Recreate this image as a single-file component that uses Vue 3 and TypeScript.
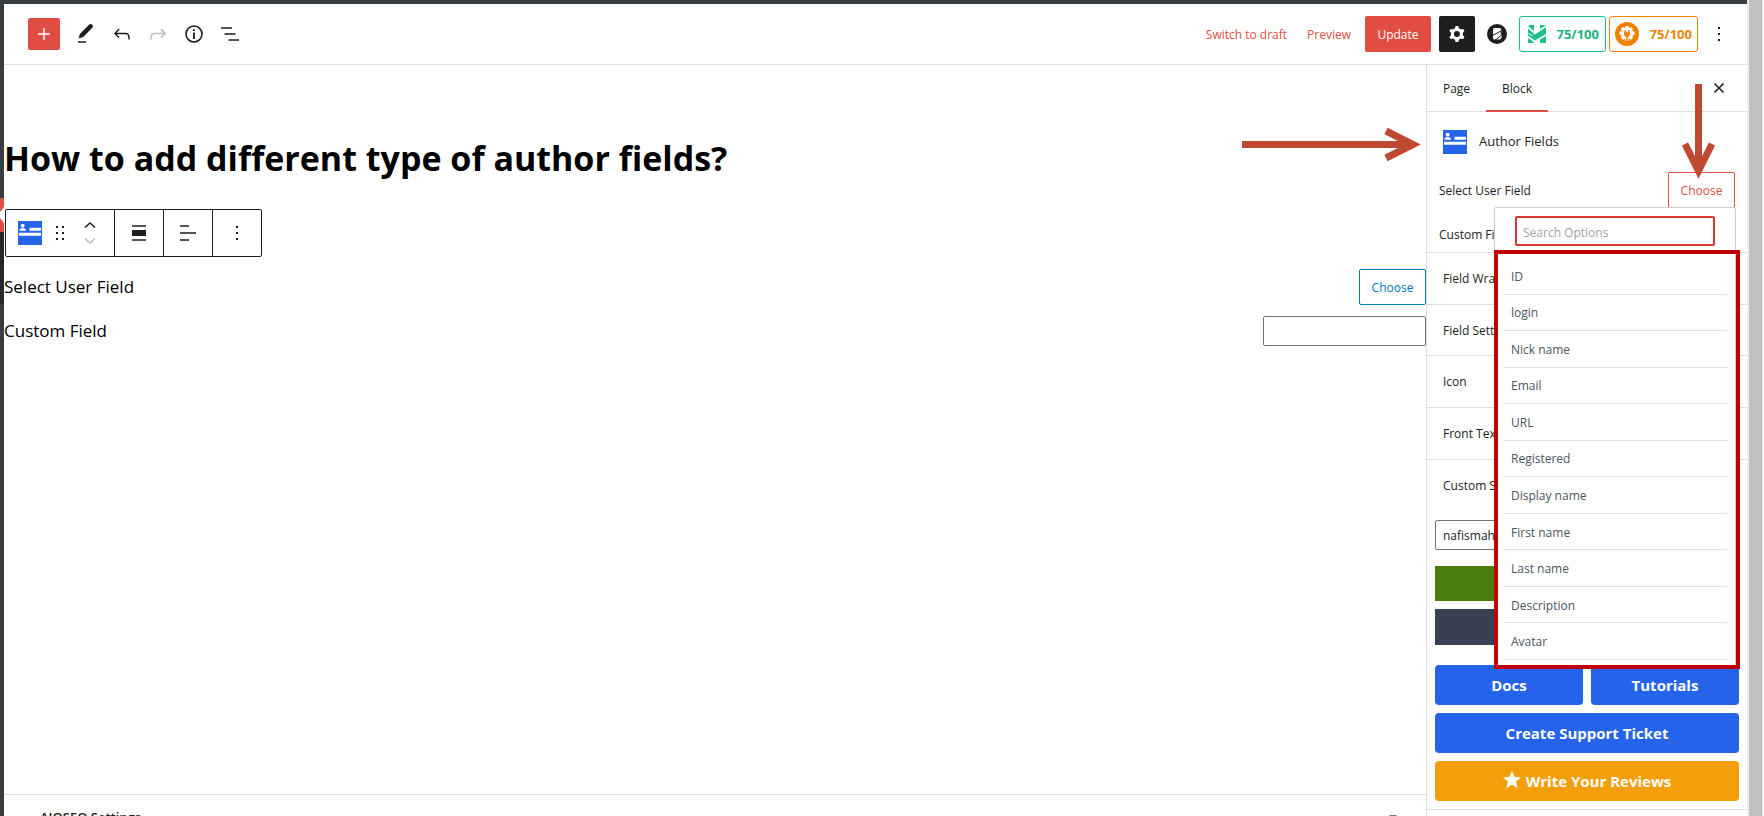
<script setup lang="ts">
import { ref } from 'vue'

const tab = ref<'page' | 'block'>('block')
const search = ref('')
const customField = ref('')
const query = ref('nafismahmud')
const panels = ['Field Wrapper', 'Field Settings', 'Icon', 'Front Text']
const options = ['ID', 'login', 'Nick name', 'Email', 'URL', 'Registered', 'Display name', 'First name', 'Last name', 'Description', 'Avatar']
</script>

<template>
  <div class="page">
    <div class="admin-strip">
      <div class="strip-active"></div>
      <div class="strip-sub"></div>
    </div>
    <div class="editor">
      <header class="topbar">
        <div class="tools">
          <button class="add" aria-label="Add block">
            <svg width="24" height="24" viewBox="0 0 24 24"><path d="M12 6v12M6 12h12" stroke="#fff" stroke-width="1.5" /></svg>
          </button>
          <button class="tool" aria-label="Tools">
            <svg width="24" height="24" viewBox="0 0 24 24"><path d="M4.6 16.2 5.9 12 15.2 2.6c.9-.9 2.200-.6 3 .2.9.9 1 2 .1 2.900L9 15.200 4.600 16.200Z" fill="#1e1e1e" /><path d="M4 20h8" stroke="#1e1e1e" stroke-width="1.5" /></svg>
          </button>
          <button class="tool" aria-label="Undo">
            <svg width="24" height="24" viewBox="0 0 24 24"><path d="M18.300 11.700c-.6-.6-1.400-.9-2.300-.9H6.700l2.900-3.300-1.100-1-4.500 5L8.500 16l1-1-2.700-2.700H16c.5 0 .9.2 1.300.5 1 1 1 3.400 1 4.500v.3h1.500v-.2c0-1.500 0-4.300-1.500-5.700z" fill="#1e1e1e" /></svg>
          </button>
          <button class="tool" aria-label="Redo" disabled>
            <svg width="24" height="24" viewBox="0 0 24 24"><path d="M15.600 6.500l-1.100 1 2.900 3.300H8c-.9 0-1.700.3-2.300.9-1.400 1.500-1.400 4.200-1.400 5.600v.2h1.500v-.3c0-1.100 0-3.500 1-4.500.3-.3.7-.5 1.300-.5h9.200L14.500 15l1.100 1.100 4.600-4.600-4.600-5z" fill="#bcbcbc" /></svg>
          </button>
          <button class="tool" aria-label="Details">
            <svg width="24" height="24" viewBox="0 0 24 24"><circle cx="12" cy="12" r="8" fill="none" stroke="#1e1e1e" stroke-width="1.6" /><path d="M11.100 10.600h1.800V17h-1.800zM11.100 7.200h1.800v1.700h-1.800z" fill="#1e1e1e" /></svg>
          </button>
          <button class="tool" aria-label="List view">
            <svg width="24" height="24" viewBox="0 0 24 24"><path d="M3 6h11M6.500 12h11M10.500 18h10.500" stroke="#1e1e1e" stroke-width="1.500" /></svg>
          </button>
        </div>
        <div class="actions">
          <button class="text-btn draft">Switch to draft</button>
          <button class="text-btn preview">Preview</button>
          <button class="update">Update</button>
          <button class="gear" aria-label="Settings">
            <svg width="24" height="24" viewBox="0 0 24 24"><path d="M10.289 4.836A1 1 0 0 1 11.275 4h1.306a1 1 0 0 1 .987.836l.244 1.466c.788.260 1.503.679 2.108 1.218l1.393-.522a1 1 0 0 1 1.216.437l.653 1.130a1 1 0 0 1-.230 1.273l-1.148.944a6.025 6.025 0 0 1 0 2.435l1.149.946a1 1 0 0 1 .230 1.272l-.653 1.130a1 1 0 0 1-1.216.437l-1.394-.522c-.605.540-1.320.958-2.108 1.218l-.244 1.466a1 1 0 0 1-.987.836h-1.306a1 1 0 0 1-.986-.836l-.244-1.466a5.995 5.995 0 0 1-2.108-1.218l-1.394.522a1 1 0 0 1-1.217-.436l-.653-1.131a1 1 0 0 1 .230-1.272l1.149-.946a6.026 6.026 0 0 1 0-2.435l-1.148-.944a1 1 0 0 1-.230-1.272l.653-1.131a1 1 0 0 1 1.217-.437l1.393.522a5.994 5.994 0 0 1 2.108-1.218l.244-1.466zM14.929 12a3 3 0 1 1-6 0 3 3 0 0 1 6 0z" fill="#fff" fill-rule="evenodd" /></svg>
          </button>
          <button class="brand" aria-label="Blocks">
            <svg width="20" height="20" viewBox="0 0 20 20"><circle cx="10" cy="10" r="10" fill="#1e1e1e" /><path d="M7.500 4h4.900c2.300 0 2.900 3.600.9 5.200 2.300 1.400 2 6.400-1.600 6.400H7.500c-.9 0-1.500-.6-1.500-1.500V5.500C6 4.600 6.600 4 7.500 4Z" fill="#fff" /><path d="M5 11.800 15 6.400M8 16.400 15.500 10.400" stroke="#1e1e1e" stroke-width="1" /></svg>
          </button>
          <button class="score green">
            <svg width="18" height="18" viewBox="0 0 18 18"><path d="M1 0h5v6L.5 1.500zM12 0h6L12 4zM0 3.500 7 9.500 18 2v7L7 15.500 0 11zM0 13l5.500 3.500V18H0zM12 14.500 18 11v7h-6z" fill="#1ec08a" /><path d="M0 8.500 5 11" stroke="#fff" stroke-width=".8" /></svg>
            <span>75/100</span>
          </button>
          <button class="score orange">
            <svg width="24" height="24" viewBox="0 0 24 24"><circle cx="12" cy="12" r="12" fill="#f18200" /><path d="M10.500 4h3l.5 2 2-1 2 2-1 2 2.500.7v3l-2.300.8 1 2-2.200 2.200-2-1-.5 2.300h-3l-.7-2.300-2 1-2-2.200 1-2-2.300-.8v-3L6.800 9l-1-2 2.200-2 2 1z" fill="#fff" /><path d="M10.200 8v3M13.800 8v3" stroke="#f18200" stroke-width="1.400" /><path d="M9 10.300h6v1.700c0 1.600-.8 2.600-2.200 3v4.500h-1.600V15C9.800 14.600 9 13.600 9 12z" fill="#f18200" /></svg>
            <span>75/100</span>
          </button>
          <button class="more" aria-label="Options">
            <svg width="24" height="24" viewBox="0 0 24 24"><path d="M11 5h2v2h-2zM11 11h2v2h-2zM11 17h2v2h-2z" fill="#1e1e1e" /></svg>
          </button>
        </div>
      </header>

      <div class="body">
        <main class="main">
          <div class="canvas">
            <h1>How to add different type of author fields?</h1>
            <div class="block-toolbar">
              <div class="group first">
                <button class="plain" aria-label="Author Fields">
                  <svg width="24" height="24" viewBox="0 0 24 24"><path d="M0 0h24v24H0z" fill="#2563eb" /><circle cx="4.700" cy="4.700" r="1.900" fill="#fff" /><path d="M1.500 9.700V8.500Q2 7 4.700 7T8 8.500v1.200zM11.500 6.700H23v3H11.500zM1 11.800h22v3H1z" fill="#fff" /></svg>
                </button>
                <button class="plain" aria-label="Drag">
                  <svg width="10" height="16" viewBox="0 0 10 16"><path d="M1 1h2v2H1zM7 1h2v2H7zM1 7h2v2H1zM7 7h2v2H7zM1 13h2v2H1zM7 13h2v2H7z" fill="#1e1e1e" /></svg>
                </button>
                <button class="plain mover" aria-label="Move">
                  <svg width="12" height="24" viewBox="0 0 12 24"><path d="M1 6.500 6 2l5 4.500" fill="none" stroke="#1e1e1e" stroke-width="1.600" /><path d="m1 17.500 5 4.500 5-4.500" fill="none" stroke="#bcbcbc" stroke-width="1.600" /></svg>
                </button>
              </div>
              <div class="group">
                <button class="plain" aria-label="Align">
                  <svg width="24" height="24" viewBox="0 0 24 24"><path d="M5 5h14M5 19h14" stroke="#1e1e1e" stroke-width="1.500" /><path d="M5 9h14v6H5z" fill="#1e1e1e" /></svg>
                </button>
              </div>
              <div class="group">
                <button class="plain" aria-label="Text align">
                  <svg width="24" height="24" viewBox="0 0 24 24"><path d="M4 5h9M4 12h16M4 19h9" stroke="#1e1e1e" stroke-width="1.500" /></svg>
                </button>
              </div>
              <div class="group">
                <button class="plain" aria-label="More">
                  <svg width="24" height="24" viewBox="0 0 24 24"><path d="M11 5h2v2h-2zM11 11h2v2h-2zM11 17h2v2h-2z" fill="#1e1e1e" /></svg>
                </button>
              </div>
            </div>
            <div class="field-row">
              <span>Select User Field</span>
              <button class="choose blue">Choose</button>
            </div>
            <div class="field-row second">
              <label for="canvas-field">Custom Field</label>
              <input id="canvas-field" v-model="customField" class="box" type="text" />
            </div>
          </div>
          <section class="metabox">
            <h2>AIOSEO Settings</h2>
            <svg width="10" height="6" viewBox="0 0 10 6"><path d="M1 0h8L5 5z" fill="#787c82" /></svg>
          </section>
        </main>

        <aside class="sidebar">
          <nav class="tabs">
            <button :class="{ active: tab === 'page' }" @click="tab = 'page'">Page</button>
            <button :class="{ active: tab === 'block' }" @click="tab = 'block'">Block</button>
            <button class="close" aria-label="Close">
              <svg width="12" height="12" viewBox="0 0 12 12"><path d="m1.500 1.500 9 9M10.500 1.500l-9 9" stroke="#1e1e1e" stroke-width="1.600" /></svg>
            </button>
          </nav>
          <div class="card">
            <svg width="24" height="24" viewBox="0 0 24 24"><path d="M0 0h24v24H0z" fill="#2563eb" /><circle cx="4.700" cy="4.700" r="1.900" fill="#fff" /><path d="M1.500 9.700V8.500Q2 7 4.700 7T8 8.500v1.200zM11.500 6.700H23v3H11.500zM1 11.800h22v3H1z" fill="#fff" /></svg>
            <h2>Author Fields</h2>
          </div>
          <div class="select-row">
            <span>Select User Field</span>
            <button class="choose red">Choose</button>
            <div class="popover">
              <input v-model="search" class="search" type="text" placeholder="Search Options" aria-label="Search Options" />
              <div class="frame">
                <ul>
                  <li v-for="o in options" :key="o"><button>{{ o }}</button></li>
                </ul>
              </div>
            </div>
          </div>
          <div class="custom-row">Custom Field</div>
          <button v-for="p in panels" :key="p" class="panel">{{ p }}</button>
          <section class="source">
            <label for="source">Custom Source</label>
            <input id="source" v-model="query" class="box" type="text" />
            <button class="bar olive" aria-label="Apply"></button>
            <button class="bar slate" aria-label="Reset"></button>
          </section>
          <div class="links">
            <a href="#docs">Docs</a>
            <a href="#tutorials">Tutorials</a>
            <a href="#support" class="wide">Create Support Ticket</a>
            <a href="#reviews" class="wide amber">
              <svg width="18" height="20" viewBox="0 0 18 20"><path d="m9 0 2.600 5.800 6.400.6-4.800 4.200L14.600 17 9 13.700 3.400 17l1.400-6.400L0 6.400l6.400-.6z" fill="#fff" /></svg>
              <span>Write Your Reviews</span>
            </a>
          </div>
          <svg class="arrow across" width="180" height="36" viewBox="0 0 180 36"><path d="M0 17.500h168" stroke="#bf4a31" stroke-width="7" /><path d="M144 4 171 17.500 144 31" fill="none" stroke="#bf4a31" stroke-width="7" /></svg>
          <svg class="arrow down" width="36" height="96" viewBox="0 0 36 96"><path d="M17.500 0v84" stroke="#bf4a31" stroke-width="7" /><path d="M4 60 17.500 87 31 60" fill="none" stroke="#bf4a31" stroke-width="7" /></svg>
        </aside>
      </div>
    </div>
    <div class="scroll"><div class="thumb"></div></div>
  </div>
</template>

<style>
body {
  margin: 0;
  overflow: hidden;
}
</style>

<style scoped>
.page {
  display: flex;
  height: 100vh;
  overflow: hidden;
  background: #fff;
  color: #1e1e1e;
  font: 12px/20px "Open Sans", "Noto Sans", sans-serif;
}
.page * {
  box-sizing: border-box;
}
button,
input {
  margin: 0;
  padding: 0;
  border: 0;
  background: none;
  color: inherit;
  font: inherit;
}
svg {
  display: block;
  flex: none;
}
.admin-strip {
  width: 4px;
  flex: none;
  padding-top: 198px;
  background: #373c40;
}
.strip-active {
  height: 34px;
  background: #e14d43;
}
.strip-active::before {
  content: "";
  display: block;
  height: 34px;
  background: #fff;
  clip-path: polygon(100% 9px, 100% 25px, 0 20px, 0 14px);
}
.strip-sub {
  height: 72px;
  background: #23282a;
}
.editor {
  flex: 1;
  min-width: 0;
  display: flex;
  flex-direction: column;
  border-top: 4px solid #373c40;
}
.topbar {
  display: flex;
  flex: none;
  align-items: center;
  justify-content: space-between;
  height: 61px;
  padding: 0 10px 0 24px;
  border-bottom: 1px solid #ddd;
}
.tools,
.actions {
  display: flex;
  align-items: center;
}
.add {
  display: grid;
  place-items: center;
  width: 32px;
  height: 32px;
  margin-right: 8px;
  border-radius: 2px;
  background: #e14d43;
}
.tool {
  display: grid;
  place-items: center;
  width: 36px;
  height: 36px;
}
.text-btn {
  padding-top: 2px;
  color: #e14d43;
}
.draft {
  margin-right: 20px;
}
.preview {
  margin-right: 14px;
}
.update {
  width: 66px;
  height: 36px;
  padding-top: 2px;
  margin-right: 8px;
  border-radius: 2px;
  background: #e14d43;
  color: #fff;
}
.gear {
  display: grid;
  place-items: center;
  width: 36px;
  height: 36px;
  margin-right: 12px;
  border-radius: 2px;
  background: #1e1e1e;
}
.brand {
  margin-right: 12px;
}
.score {
  display: flex;
  align-items: center;
  justify-content: space-between;
  height: 36px;
  border: 1px solid;
  border-radius: 3px;
  font-size: 13px;
  font-weight: 700;
}
.green {
  width: 87px;
  margin-right: 3px;
  padding: 0 6px 0 8px;
  border-color: #1ec08a;
  color: #1eb380;
}
.orange {
  width: 89px;
  margin-right: 3px;
  padding: 0 5px;
  border-color: #f18200;
  color: #f18200;
}
.more {
  display: grid;
  place-items: center;
  width: 36px;
  height: 36px;
}
.body {
  display: flex;
  flex: 1;
  min-height: 0;
}
.main {
  display: flex;
  flex: 1;
  flex-direction: column;
  min-width: 0;
}
.canvas {
  flex: 1;
  padding-top: 68px;
}
h1 {
  margin: 0 0 26px;
  color: #000;
  font-size: 34px;
  font-weight: 700;
  line-height: 50px;
}
.block-toolbar {
  display: inline-flex;
  height: 48px;
  margin-left: 1px;
  border: 1px solid #1e1e1e;
  border-radius: 2px;
  vertical-align: top;
}
.group {
  display: flex;
  align-items: center;
  justify-content: center;
  width: 49px;
  border-right: 1px solid #1e1e1e;
}
.group:last-child {
  width: 48px;
  border-right: 0;
}
.first {
  justify-content: flex-start;
  width: 109px;
  padding-left: 12px;
  gap: 13px;
}
.mover {
  margin-left: 6px;
}
.field-row {
  display: flex;
  align-items: center;
  justify-content: space-between;
  margin-top: 12px;
  color: #000;
  font-size: 17px;
}
.second {
  margin-top: 11px;
}
.choose {
  width: 67px;
  height: 36px;
  padding-top: 2px;
  border: 1px solid;
  border-radius: 2px;
  font-size: 12px;
}
.blue {
  color: #007cba;
}
.red {
  color: #e14d43;
}
.box {
  width: 163px;
  height: 30px;
  padding: 0 7px;
  border: 1px solid #757575;
  border-radius: 2px;
  font-size: 12px;
}
.metabox {
  display: flex;
  flex: none;
  justify-content: space-between;
  height: 22px;
  overflow: hidden;
  padding: 12px 28px 0 36px;
  border-top: 1px solid #ddd;
}
.metabox h2 {
  margin: 0;
  font-size: 13px;
  font-weight: 600;
  line-height: 20px;
}
.metabox svg {
  margin-top: 8px;
}
.sidebar {
  position: relative;
  display: flex;
  flex: none;
  flex-direction: column;
  width: 321px;
  border-left: 1px solid #ddd;
}
.tabs {
  display: flex;
  flex: none;
  height: 47px;
  border-bottom: 1px solid #ddd;
}
.tabs button {
  width: 62px;
  height: 47px;
  font-weight: 500;
}
.tabs button:first-child {
  width: 59px;
}
.tabs .active {
  border-bottom: 2px solid #e14d43;
  padding-top: 2px;
}
.tabs .close {
  display: grid;
  place-items: center;
  width: 36px;
  height: 46px;
  margin-left: auto;
  margin-right: 10px;
}
.card {
  display: flex;
  gap: 12px;
  align-items: center;
  height: 60px;
  padding: 0 16px;
}
.card h2 {
  margin: 0;
  padding-bottom: 3px;
  font-size: 13px;
  font-weight: 400;
  line-height: 20px;
}
.select-row {
  position: relative;
  display: flex;
  align-items: center;
  justify-content: space-between;
  height: 36px;
  padding: 0 12px;
}
.select-row > span {
  padding-top: 2px;
}
.popover {
  position: absolute;
  z-index: 1;
  top: 35px;
  right: 7px;
  width: 246px;
}
.popover::before {
  content: "";
  position: absolute;
  inset: 0 4px 0 0;
  border: 1px solid #ccc;
  border-radius: 2px;
  background: #fff;
}
.search {
  position: relative;
  display: block;
  width: 200px;
  height: 30px;
  margin: 9px 0 4px 21px;
  padding: 2px 6px 0;
  border: 2px solid #dc3832;
  border-radius: 2px;
}
.search::placeholder {
  color: #9ca3af;
  opacity: 1;
}
.frame {
  position: relative;
  height: 419px;
  padding: 4px 9px 5px 5px;
  border: 4px solid #c00000;
}
ul {
  display: grid;
  grid-auto-rows: 1fr;
  height: 402px;
  margin: 0;
  padding: 0;
  list-style: none;
}
li {
  border-bottom: 1px solid #e2e4e7;
}
li button {
  width: 100%;
  height: 100%;
  padding: 2px 0 0 8px;
  color: #4b5563;
  text-align: left;
}
.custom-row {
  display: flex;
  align-items: center;
  height: 44px;
  padding: 10px 12px 0;
}
.panel {
  flex: none;
  height: 52px;
  padding: 1px 16px 0;
  border-top: 1px solid #ddd;
  font-weight: 500;
  text-align: left;
}
.panel:nth-of-type(2) {
  height: 51px;
}
.source {
  display: flex;
  flex-direction: column;
  gap: 8px;
  padding: 16px 8px 20px;
  border-top: 1px solid #ddd;
}
.source label {
  padding-left: 8px;
  margin-bottom: 16px;
  font-weight: 500;
}
.source .box {
  width: 100%;
  margin-bottom: 8px;
}
.bar {
  height: 35px;
}
.olive {
  background: #4d7c0f;
}
.slate {
  height: 36px;
  background: #374151;
}
.links {
  display: grid;
  grid-template-columns: 1fr 1fr;
  gap: 8px;
  padding: 0 8px 8px;
  border-bottom: 1px solid #ddd;
}
.links a {
  display: flex;
  align-items: center;
  justify-content: center;
  gap: 5px;
  height: 40px;
  border-radius: 4px;
  background: #2563eb;
  color: #fff;
  font-size: 15px;
  font-weight: 700;
  text-decoration: none;
}
.links .wide {
  grid-column: 1 / -1;
}
.links .amber {
  background: #f59e0b;
}
.arrow {
  position: absolute;
  z-index: 2;
  pointer-events: none;
}
.across {
  top: 62px;
  left: -185px;
}
.down {
  top: 19px;
  right: 30px;
}
.scroll {
  display: flex;
  justify-content: center;
  width: 17px;
  flex: none;
  background: #f1f1f1;
}
.thumb {
  width: 13px;
  background: #c1c1c1;
}
</style>
